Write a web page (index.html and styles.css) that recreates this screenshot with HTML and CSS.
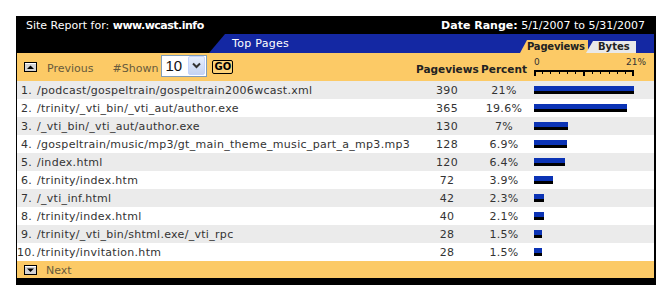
FILE: index.html
```html
<!DOCTYPE html>
<html>
<head>
<meta charset="utf-8">
<link rel="stylesheet" href="styles.css">
</head>
<body>
<div class="report">
  <div class="top">
    <span>Site Report for: <b class="site">www.wcast.info</b></span>
    <span><b>Date Range:</b> 5/1/2007 to 5/31/2007</span>
  </div>
  <div class="band">
    <div class="blue">
      <span class="title">Top Pages</span>
      <div class="tabs">
        <span class="tab on">Pageviews</span>
        <span class="tab off">Bytes</span>
      </div>
    </div>
  </div>
  <div class="head">
    <div class="controls">
      <span class="ico"><svg width="13" height="10" viewBox="0 0 13 10"><rect x="0.5" y="0.5" width="12" height="9" fill="#d4d4d4" stroke="#000"/><rect x="1" y="1" width="11" height="1" fill="#fff"/><path d="M3 7h7L6.5 3.5z" fill="#000"/></svg></span>
      <span class="nav prev">Previous</span>
      <span class="nav shown">#Shown</span>
      <span class="sel"><span class="selval">10</span><span class="selbtn"><svg width="9" height="7" viewBox="0 0 9 7"><path d="M1 1.5l3.5 3.5 3.5-3.5" fill="none" stroke="#333" stroke-width="2"/></svg></span></span>
      <span class="go">GO</span>
    </div>
    <div class="hcol">Pageviews</div>
    <div class="hcol">Percent</div>
    <div class="scale">
      <div class="labels"><span>0</span><span>21%</span></div>
      <svg width="102" height="7" viewBox="0 0 102 7">
        <rect x="1" y="0" width="100" height="2" fill="#000"/>
        <rect x="1" y="0" width="2" height="6" fill="#000"/>
        <rect x="99" y="0" width="2" height="6" fill="#000"/>
        <rect x="50" y="0" width="2" height="6" fill="#000"/>
        <rect x="9" y="2" width="1" height="2" fill="#000"/>
        <rect x="17" y="2" width="1" height="2" fill="#000"/>
        <rect x="26" y="2" width="1" height="2" fill="#000"/>
        <rect x="34" y="2" width="1" height="2" fill="#000"/>
        <rect x="42" y="2" width="1" height="2" fill="#000"/>
        <rect x="59" y="2" width="1" height="2" fill="#000"/>
        <rect x="67" y="2" width="1" height="2" fill="#000"/>
        <rect x="76" y="2" width="1" height="2" fill="#000"/>
        <rect x="84" y="2" width="1" height="2" fill="#000"/>
        <rect x="92" y="2" width="1" height="2" fill="#000"/>
      </svg>
    </div>
  </div>
  <div class="row"><span class="num">1.</span><span class="path">/podcast/gospeltrain/gospeltrain2006wcast.xml</span><span class="pv">390</span><span class="pct">21%</span><span class="barcell"><span class="bar" style="width:100px"></span></span></div>
  <div class="row"><span class="num">2.</span><span class="path">/trinity/_vti_bin/_vti_aut/author.exe</span><span class="pv">365</span><span class="pct">19.6%</span><span class="barcell"><span class="bar" style="width:93px"></span></span></div>
  <div class="row"><span class="num">3.</span><span class="path">/_vti_bin/_vti_aut/author.exe</span><span class="pv">130</span><span class="pct">7%</span><span class="barcell"><span class="bar" style="width:34px"></span></span></div>
  <div class="row"><span class="num">4.</span><span class="path">/gospeltrain/music/mp3/gt_main_theme_music_part_a_mp3.mp3</span><span class="pv">128</span><span class="pct">6.9%</span><span class="barcell"><span class="bar" style="width:33px"></span></span></div>
  <div class="row"><span class="num">5.</span><span class="path">/index.html</span><span class="pv">120</span><span class="pct">6.4%</span><span class="barcell"><span class="bar" style="width:31px"></span></span></div>
  <div class="row"><span class="num">6.</span><span class="path">/trinity/index.htm</span><span class="pv">72</span><span class="pct">3.9%</span><span class="barcell"><span class="bar" style="width:19px"></span></span></div>
  <div class="row"><span class="num">7.</span><span class="path">/_vti_inf.html</span><span class="pv">42</span><span class="pct">2.3%</span><span class="barcell"><span class="bar" style="width:10px"></span></span></div>
  <div class="row"><span class="num">8.</span><span class="path">/trinity/index.html</span><span class="pv">40</span><span class="pct">2.1%</span><span class="barcell"><span class="bar" style="width:10px"></span></span></div>
  <div class="row"><span class="num">9.</span><span class="path">/trinity/_vti_bin/shtml.exe/_vti_rpc</span><span class="pv">28</span><span class="pct">1.5%</span><span class="barcell"><span class="bar" style="width:8px"></span></span></div>
  <div class="row"><span class="num">10.</span><span class="path">/trinity/invitation.htm</span><span class="pv">28</span><span class="pct">1.5%</span><span class="barcell"><span class="bar" style="width:8px"></span></span></div>
  <div class="foot">
    <span class="ico"><svg width="13" height="10" viewBox="0 0 13 10"><rect x="0.5" y="0.5" width="12" height="9" fill="#d4d4d4" stroke="#000"/><rect x="1" y="1" width="11" height="1" fill="#fff"/><path d="M3 3.5h7L6.5 7z" fill="#000"/></svg></span>
    <span class="nav next">Next</span>
  </div>
</div>
</body>
</html>
```
FILE: styles.css
```css
body {
  margin: 0;
  background: #fff;
  font-family: "DejaVu Sans", Verdana, sans-serif;
  font-size: 11px;
  color: #333;
}
.report {
  margin: 16px 0 0 16px;
  width: 637px;
  border-left: 1px solid #000;
  border-right: 2px solid #000;
  border-bottom: 7px solid #000;
  background: #000;
}
.top {
  height: 18px;
  display: flex;
  justify-content: space-between;
  align-items: center;
  padding: 0 9px;
  color: #fff;
}
.site { letter-spacing: -0.5px; }
.band {
  height: 19px;
  display: flex;
  padding-left: 192px;
}
.blue {
  flex: 1;
  display: flex;
  align-items: flex-end;
  background: #1428a3;
  clip-path: polygon(16px 0, 100% 0, 100% 100%, 0 100%);
}
.title {
  align-self: center;
  margin-left: 23px;
  color: #fff;
  letter-spacing: 0.3px;
}
.tabs {
  margin-left: auto;
  margin-right: 18px;
  display: flex;
  align-items: flex-end;
}
.tab {
  box-sizing: border-box;
  height: 13px;
  line-height: 13px;
  font-size: 10px;
  font-weight: bold;
  color: #222;
  white-space: nowrap;
  clip-path: polygon(7px 0, 100% 0, 100% 100%, 0 100%);
}
.tab.on {
  width: 68px;
  padding-left: 7px;
  background: #fcca66;
  letter-spacing: -0.2px;
}
.tab.off {
  position: relative;
  width: 50px;
  height: 12px;
  line-height: 12px;
  margin-left: -2px;
  padding-left: 12px;
  background: #e9e9e9;
}
.head {
  height: 28px;
  display: grid;
  grid-template-columns: 15px 384px 62px 52px 1fr;
  align-items: center;
  background: #fcca66;
}
.controls {
  grid-column: 1 / 3;
  display: flex;
  align-items: center;
  padding-left: 7px;
  height: 28px;
}
.ico {
  display: block;
  width: 13px;
  height: 10px;
}
.ico svg { display: block; }
.nav {
  color: #675a3c;
  padding-top: 3px;
}
.prev { margin-left: 10px; }
.shown { margin-left: 19px; }
.sel {
  box-sizing: border-box;
  display: flex;
  align-items: center;
  width: 46px;
  height: 22px;
  margin-left: 3px;
  margin-top: -3px;
  border: 1px solid #7f9db9;
  background: #fff;
}
.selval {
  flex: 1;
  padding-left: 3px;
  font-family: "Liberation Sans", Arial, sans-serif;
  font-size: 15px;
  color: #111;
}
.selbtn {
  box-sizing: border-box;
  width: 17px;
  height: 19px;
  margin-right: 1px;
  display: flex;
  align-items: center;
  justify-content: center;
  border: 1px solid #c3d3fd;
  border-radius: 2px;
  background: linear-gradient(#e6eefc, #c6d4f2);
}
.selbtn svg { display: block; }
.go {
  box-sizing: border-box;
  width: 21px;
  height: 14px;
  margin-left: 5px;
  margin-top: -1px;
  border: 1.5px solid #000;
  border-radius: 2px;
  background: #fcd27a;
  font-size: 10px;
  font-weight: bold;
  line-height: 11px;
  text-align: center;
  color: #000;
}
.hcol {
  text-align: center;
  font-weight: bold;
  font-size: 10.5px;
  color: #222;
  padding-top: 3px;
  white-space: nowrap;
}
.scale {
  align-self: start;
  margin-top: 4px;
  padding-left: 4px;
  width: 112px;
}
.labels {
  display: flex;
  justify-content: space-between;
  font-size: 9px;
  line-height: 11px;
  height: 13px;
}
.scale svg { display: block; margin-left: -1px; }
.row {
  height: 18px;
  display: grid;
  grid-template-columns: 15px 384px 62px 52px 1fr;
  align-items: center;
  letter-spacing: 0.3px;
}
.row:nth-child(even) { background: #ebebeb; }
.row:nth-child(odd) { background: #fff; }
.num { text-align: right; white-space: nowrap; }
.path { padding-left: 5px; white-space: nowrap; }
.pv, .pct { text-align: center; }
.barcell { display: flex; }
.bar {
  display: block;
  height: 8px;
  margin-left: 4px;
  background: linear-gradient(#0b33b5 0 5px, #000 5px 8px);
}
.foot {
  height: 17px;
  display: flex;
  align-items: center;
  padding-left: 7px;
  background: #fcca66;
}
.next { margin-left: 9px; padding-top: 1px; }
```
